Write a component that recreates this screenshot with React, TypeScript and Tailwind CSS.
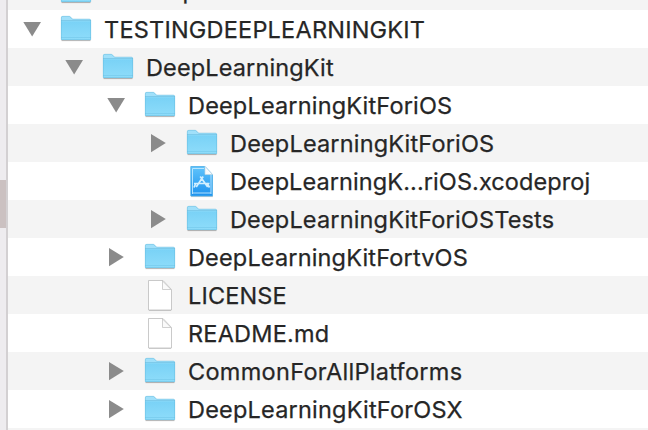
type Kind = "folder" | "project" | "file";
type Row = { name: string; x: number; kind: Kind; arrow?: "down" | "right"; shade: string; label: string };

const rows: Row[] = [
  { name: "Desktop", x: 60, kind: "folder", shade: "bg-[#f4f4f4]", label: "-mt-0.5 tracking-[0.15px]" },
  { name: "TESTINGDEEPLEARNINGKIT", x: 60, kind: "folder", arrow: "down", shade: "bg-white", label: "tracking-[0.21px]" },
  { name: "DeepLearningKit", x: 102, kind: "folder", arrow: "down", shade: "bg-[#f4f4f4]", label: "tracking-[0.13px]" },
  { name: "DeepLearningKitForiOS", x: 144, kind: "folder", arrow: "down", shade: "bg-white", label: "tracking-[0.17px]" },
  { name: "DeepLearningKitForiOS", x: 186, kind: "folder", arrow: "right", shade: "bg-[#f4f4f4]", label: "tracking-[0.17px]" },
  { name: "DeepLearningK...riOS.xcodeproj", x: 186, kind: "project", shade: "bg-white", label: "tracking-[0.09px]" },
  { name: "DeepLearningKitForiOSTests", x: 186, kind: "folder", arrow: "right", shade: "bg-[#f4f4f4]", label: "tracking-[0.16px]" },
  { name: "DeepLearningKitFortvOS", x: 144, kind: "folder", arrow: "right", shade: "bg-white", label: "tracking-[0.16px]" },
  { name: "LICENSE", x: 144, kind: "file", shade: "bg-[#f4f4f4]", label: "tracking-[0.14px]" },
  { name: "README.md", x: 144, kind: "file", shade: "bg-white", label: "tracking-[0.2px]" },
  { name: "CommonForAllPlatforms", x: 144, kind: "folder", arrow: "right", shade: "bg-[#f4f4f4]", label: "tracking-[0.29px]" },
  { name: "DeepLearningKitForOSX", x: 144, kind: "folder", arrow: "right", shade: "bg-white", label: "tracking-[0.2px]" },
];

function Icon({ kind }: { kind: Kind }) {
  return (
    <svg width="32" height="38" viewBox="0 0 32 38" className="shrink-0">
      <defs>
        <linearGradient id="folder" x1="0" y1="0" x2="0" y2="1">
          <stop stopColor="#79d2f6" />
          <stop offset="1" stopColor="#8edcfa" />
        </linearGradient>
        <linearGradient id="project" x1="0" y1="0" x2="0" y2="1">
          <stop stopColor="#61c4fb" />
          <stop offset="1" stopColor="#1d92ee" />
        </linearGradient>
      </defs>
      {kind === "folder" && (
        <>
          <path d="M1.5 30.6h29" stroke="#000" strokeOpacity=".3" />
          <path d="M1 29V7.5Q1 6 2.5 6H9q1 0 1.6.7l1.3 1.6q.5.7 1.5.7H29.500q1.500 0 1.500 1.500V29q0 1-1 1H2q-1 0-1-1Z" fill="#a0e0fa" />
          <path d="M1 11.200h30V29q0 1-1 1H2q-1 0-1-1Z" fill="url(#folder)" />
          <path d="M1 10.500h30" stroke="#6ec0e2" strokeOpacity=".7" />
          <path d="M1 27.500h30" stroke="#71c5e8" strokeOpacity=".55" />
          <path d="M1.300 29.500V7.800q0-1.500 1.500-1.500H9q1 0 1.600.8l1.100 1.400q.5.600 1.500.600h16q1.500 0 1.500 1.500v19Z" fill="none" stroke="#5db3d7" strokeOpacity=".6" strokeWidth=".7" />
        </>
      )}
      {kind === "file" && (
        <>
          <path d="M5 34.400h22" stroke="#000" strokeOpacity=".2" />
          <path d="M4.500 4.500h14.500l8.500 9v20.500h-23Z" fill="#fff" stroke="#bdbdbd" strokeWidth=".8" />
          <path d="M18.500 5v8.500h8.500Z" fill="#fafafa" stroke="#c4c4c4" strokeWidth=".8" />
        </>
      )}
      {kind === "project" && (
        <>
          <path d="M5 34.600h22" stroke="#000" strokeOpacity=".2" />
          <path d="M4.800 4.500h14.200l7.500 8v21.500h-21.700Z" fill="url(#project)" stroke="#4bade7" strokeWidth=".8" />
          <path d="M6.500 32V6.500H18" fill="none" stroke="#c1e9ff" strokeWidth=".9" />
          <path d="M25 13v19M6.500 31h18.500" fill="none" stroke="#c1e9ff" strokeWidth=".9" />
          <path d="M19 4.500v8h7.500Z" fill="#f8fbfd" stroke="#c3d7e1" strokeWidth=".7" />
          <path d="M14.200 14.500l7.500 10.500M17.200 14.500l-7 10.500M8 21.500h15.500M9.500 22l-1.500 3.500M21 21l2.500 4.500" fill="none" stroke="#d2efff" strokeWidth="1.700" />
        </>
      )}
    </svg>
  );
}

export default function App() {
  return (
    <main className="flex h-[430px] w-[648px] overflow-hidden bg-white font-[Inter,sans-serif] text-[#262626]">
      <aside className="flex w-2 shrink-0 border-r-2 border-[#d3d0d2] bg-[#eeecef]">
        <div className="mt-[180px] h-12 w-full bg-[#cbc1c1]" />
      </aside>
      <section className="-mt-7 flex flex-1 flex-col">
        {rows.map((row, i) => (
          <div key={i} className={`flex h-[38px] w-full shrink-0 items-center ${row.shade}`}>
            <div className="flex shrink-0 justify-end pr-[18px]" style={{ width: row.x - 8 }}>
              <svg width="20" height="38" viewBox="0 0 20 38">
                {row.arrow === "down" && <path d="M1.300 12h17.700L10.150 26.500Z" fill="#8b8b8b" />}
                {row.arrow === "right" && <path d="M3 10v18.200L17.800 19.100Z" fill="#8b8b8b" />}
              </svg>
            </div>
            <Icon kind={row.kind} />
            <span className={`ml-3 whitespace-nowrap pt-px text-[23.5px] leading-[38px] [-webkit-text-stroke:0.25px_#262626] ${row.label}`}>{row.name}</span>
          </div>
        ))}
        <div className="h-[38px] shrink-0 bg-[#f4f4f4]" />
      </section>
    </main>
  );
}
